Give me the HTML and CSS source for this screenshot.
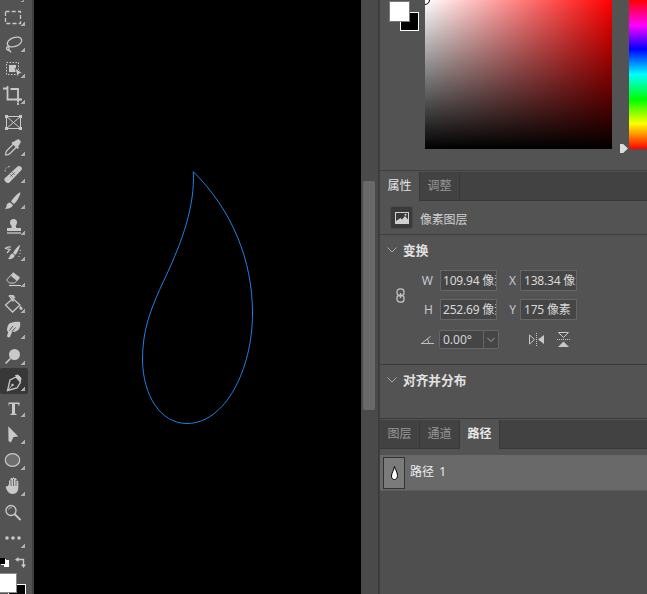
FILE: index.html
```html
<!DOCTYPE html>
<html lang="en">
<head>
  <meta charset="UTF-8">
  <meta name="viewport" content="width=device-width, initial-scale=1.0">
  <title>Paths panel</title>
  <link rel="stylesheet" href="styles.css">
</head>
<body>
  <div class="app">
    <!-- Tools -->
    <div class="toolbar">
      <div class="tool-top"></div>
      <div class="tool more"><svg viewBox="0 0 32 26"><rect x="5.5" y="8.5" width="15" height="12" fill="none" stroke="currentColor" stroke-width="1.3" stroke-dasharray="4 2.2"/></svg></div>
      <div class="tool more"><svg viewBox="0 0 32 26"><ellipse cx="14.5" cy="13" rx="7.5" ry="4.5" transform="rotate(-20 14.5 13)" fill="none" stroke="currentColor" stroke-width="1.3"/><path d="M8 17c-2 1.500-2 3.500 0 4 1.500 .4 2.500 1 3 2.500M8 17c1 1.500 1.500 2.500 1 4" fill="none" stroke="currentColor" stroke-width="1.300"/></svg></div>
      <div class="tool more"><svg viewBox="0 0 32 26"><rect x="6.500" y="7.500" width="12" height="12" fill="none" stroke="currentColor" stroke-dasharray="1.500 1.500"/><rect x="9" y="10" width="7" height="7"/><path d="M15 13l7.500 5-3.500 .8-1.500 3.500z" stroke="#535353" stroke-width=".8"/></svg></div>
      <div class="tool more"><svg viewBox="0 0 32 26"><path d="M3 7.500h4M7.500 5v13.500H21M10.500 8H18V21.500M18 22v2" fill="none" stroke="currentColor" stroke-width="1.800"/><path d="M19.500 18.500h2.500" stroke="currentColor" stroke-width="1.800"/></svg></div>
      <div class="tool"><svg viewBox="0 0 32 26"><path d="M6.500 9.500h14v12h-14zM6.500 9.500l14 12M20.500 9.500l-14 12" fill="none" stroke="currentColor"/><path d="M5 8h3v3H5zM19 8h3v3h-3zM5 20h3v3H5zM19 20h3v3h-3z"/></svg></div>
      <div class="tool more"><svg viewBox="0 0 32 26"><path d="M15 9.500l-8 8c-1 1-1.500 3-1.500 4.500 2 0 3.500-.5 4.500-1.500l8-8" fill="none" stroke="currentColor" stroke-width="1.200"/><path d="M13.500 9l2-1.500 3-1.500 2.500 2.500-1.500 3-1.500 2 1 1-1.500 1.500-6-6 1.500-1.500z"/></svg></div>
      <div class="tool more"><svg viewBox="0 0 32 26"><path d="M4.500 18.500L17.500 6.500c1-.8 2.500-.8 3.500 .2s1.300 2.500 .3 3.500L9.500 22.500c-1 .8-2.500 .8-3.500-.2s-2.300-2.500-1.500-3.800z"/><path d="M10.500 14.500l2 2M12.500 12.500l2 2M10.500 16.500l2-2M12.500 14.500l2-2" stroke="#535353"/><path d="M5 11.500c0-3 2-5 5-5" fill="none" stroke="currentColor" stroke-dasharray="1.500 1.500"/></svg></div>
      <div class="tool more"><svg viewBox="0 0 32 26"><path d="M19.500 6.500c-3 2-6.500 5.500-8.500 9l3 2.500c3-2.500 5.500-7 6.500-11.500z"/><path d="M10 16.500c-2.500 .2-3.500 2-3.500 3.500 0 1-.7 2-1.700 2.500 3 .8 7-.2 8.200-3.500z"/></svg></div>
      <div class="tool more"><svg viewBox="0 0 32 26"><circle cx="13.500" cy="10.500" r="3.500"/><path d="M11.500 12.500h4l.8 3.500H21v3H7v-3h4.500z"/><path d="M7 21h14" stroke="currentColor" stroke-width="1.300"/></svg></div>
      <div class="tool more"><svg viewBox="0 0 32 26"><path d="M19.500 7c-2.500 2-5 5-6.500 8l2.200 2c2-2 4-6 4.800-9.500z"/><path d="M12.500 15.500c-2 .4-2.500 2-3 3.500l-1.500 2c2.500 .5 6-.3 6.800-3.500z"/><path d="M5 10.500l5 1-3 3.500M5 10.500c2-1.500 4-2 6-1.500" fill="none" stroke="currentColor" stroke-width="1.200"/><path d="M20.500 12v1M20 15v1M19 18v1" stroke="currentColor"/></svg></div>
      <div class="tool more"><svg viewBox="0 0 32 26"><path d="M13.500 8.500l6.500 5-3 3.500-6-5z"/><path d="M13.500 8.500l-7 7.500 3 3h5l4.500-4.500" fill="none" stroke="currentColor"/><path d="M9 21.500h12" stroke="currentColor" stroke-width="1.200"/></svg></div>
      <div class="tool more"><svg viewBox="0 0 32 26"><path d="M13 8.500l-7.500 6.500 7 7 7.500-7z" fill="none" stroke="currentColor" stroke-width="1.300"/><path d="M9 5.500l4.500 6" fill="none" stroke="currentColor" stroke-width="1.300"/><path d="M20.500 16c1.500 1 2.200 2 2 3s-2.200 1.500-2.800 0 0-2 .8-3zM8.500 5h5l2 3-2 .5z"/></svg></div>
      <div class="tool more"><svg viewBox="0 0 32 26"><path d="M9.500 7.500c2.500-1.300 6.500-2 10.500-1.500 .5 2.500 .3 6-1.800 8-2 1.800-4.300 2-6 1.700l-2 4.800c-.5 1.200-3 1.300-3.200-.5 .5-1.500 1-3 1.300-4.300-.8-.3-1.500-1-1.300-2 .3-2.500 1-5 2.500-6.200z"/><path d="M9.500 14.500l3.500-4.500M12 15.500l3.500-4" stroke="#535353"/></svg></div>
      <div class="tool more"><svg viewBox="0 0 32 26"><circle cx="14.500" cy="12.500" r="5.500"/><path d="M10.500 16.500L5.500 21.500" stroke="currentColor" stroke-width="1.600"/></svg></div>
      <div class="tool more active"><svg viewBox="0 0 32 26"><path d="M16 9l-6 3-2.500 10.500 9.500-2.500 3.500-6z" fill="none" stroke="currentColor" stroke-width="1.300"/><path d="M15.500 7.500l2.500-.5 3 3-.5 3zM7.500 22.500l4.500-5" fill="currentColor" stroke="currentColor"/><circle cx="12.500" cy="17" r="1.200"/></svg></div>
      <div class="tool more"><svg viewBox="0 0 32 26"><path d="M8.500 8.500h11v3h-1l-.5-1.500h-3v9.500l1.500 .5v1h-6v-1l1.500-.5V10h-3L9.500 11.500h-1z"/></svg></div>
      <div class="tool more"><svg viewBox="0 0 32 26"><path d="M8.300 5.300L18.300 15.500 13.500 16 10.800 21.500 8.500 20z"/></svg></div>
      <div class="tool more"><svg viewBox="0 0 32 26"><ellipse cx="12.500" cy="13" rx="7.200" ry="6.300" fill="#6e6e6e" stroke="currentColor" stroke-width="1.200"/></svg></div>
      <div class="tool more"><svg viewBox="0 0 32 26"><path d="M9 11.500V8c0-1 1.500-1 1.500 0V6c0-1.200 2-1.200 2 0v-.5c0-1.200 2-1.200 2 0V6c0-1 2-1 2 0v2.500c0-1 1.800-1 1.800 0V15c0 3-2 6-5.500 6-3 0-4.500-1.500-6-4L5.800 14.500c-.6-1 .8-1.800 1.500-1z"/><path d="M11 7v6M13.500 6v7M16 7v6" stroke="#535353" stroke-width=".8"/></svg></div>
      <div class="tool"><svg viewBox="0 0 32 26"><circle cx="11" cy="11.500" r="5" fill="none" stroke="currentColor" stroke-width="1.300"/><path d="M8.500 10.500c.5-1.200 1.500-1.800 3-1.800" fill="none" stroke="currentColor"/><path d="M14.500 15l6 6" stroke="currentColor" stroke-width="1.800"/></svg></div>
      <div class="tool more"><svg viewBox="0 0 32 26"><circle cx="7" cy="13" r="1.800"/><circle cx="13" cy="13" r="1.800"/><circle cx="19" cy="13" r="1.800"/></svg></div>
      <!-- Foreground and background colours -->
      <div class="tool-colors">
        <div class="mini-white"></div>
        <div class="mini-black"></div>
        <svg class="swap" viewBox="0 0 11 11"><path d="M2 2.500h6.500v6" fill="none" stroke="currentColor" stroke-width="1.300"/><path d="M3.500 0v5L0 2.500zM6 7.500h5L8.500 11z"/></svg>
        <div class="tool-bg"></div>
        <div class="tool-fg"></div>
      </div>
    </div>

    <!-- Canvas -->
    <div class="canvas">
      <svg class="shape" viewBox="34 0 327 594">
        <path d="M193.300 171.700C195 205 183 240 165 278C150 310 142.500 330 142.500 360C143 395 160 423.500 187 423.500C225 423.500 252.500 370 252.500 313C252.500 260 232 210 193.300 171.700Z"/>
      </svg>
    </div>

    <div class="gutter"><div class="thumb"></div></div>

    <!-- Panels -->
    <div class="panels">
      <section class="color-panel">
        <div class="swatches">
          <div class="swatch-bg"></div>
          <div class="swatch-fg"></div>
        </div>
        <div class="picker"><div class="picker-ring"></div></div>
        <div class="hue-slot"><div class="hue-arrow"></div></div>
        <div class="hue"></div>
      </section>

      <div class="tabs">
        <div class="tab active">属性</div>
        <div class="tab">调整</div>
      </div>

      <div class="layer-kind">
        <div class="kind-icon">
          <svg viewBox="0 0 14 12"><path d="M0 0h14v12H0z" fill="#d0d0d0"/><path d="M1 1h12v6.500L10 4 7 7.500 5.500 6 1 9z" fill="#3a3a3a"/><circle cx="10.500" cy="2.700" r="1" fill="#d0d0d0"/></svg>
        </div>
        <span>像素图层</span>
      </div>

      <section class="transform">
        <div class="section-head"><svg class="chevron" viewBox="0 0 10 6"><path d="M.5 .5L5 5 9.500 .5"/></svg><b>变换</b></div>
        <div class="size-block">
          <div class="link-col">
            <svg viewBox="0 0 9 15"><rect x="1" y=".8" width="7" height="7" rx="3" /><rect x="1" y="7.200" width="7" height="7" rx="3"/><path d="M4.500 5v5"/></svg>
          </div>
          <div class="fields">
            <label>W</label><div class="field">109.94 像素</div>
            <label>X</label><div class="field">138.34 像素</div>
            <label>H</label><div class="field">252.69 像素</div>
            <label>Y</label><div class="field">175 像素</div>
          </div>
        </div>
        <div class="angle-row">
          <svg class="angle-icon" viewBox="0 0 13 8"><path d="M0 7.500h13M.5 7.500L9.500 .5M6.500 3c.8 1.300 1.200 2.800 1.200 4.500"/></svg>
          <div class="angle-select"><span>0.00°</span><i><svg class="chevron" viewBox="0 0 10 6"><path d="M1.500 1L5 4.500 8.500 1"/></svg></i></div>
          <svg class="flip-h" viewBox="0 0 15 13"><path d="M.5 2v9l5-4.500z" fill="none" stroke="#c8c8c8"/><path d="M15 2v9l-6-4.500z" fill="#c8c8c8"/><path d="M7.500 0v13" stroke="#c8c8c8" stroke-dasharray="1 1"/></svg>
          <svg class="flip-v" viewBox="0 0 13 15"><path d="M1.500 .5h10L6.500 5.500z" fill="none" stroke="#c8c8c8"/><path d="M0 7.500h13" stroke="#c8c8c8" stroke-dasharray="1 1"/><path d="M1 15h11l-5.500-5.500z" fill="#c8c8c8"/></svg>
        </div>
      </section>

      <section class="align">
        <div class="section-head"><svg class="chevron" viewBox="0 0 10 6"><path d="M.5 .5L5 5 9.500 .5"/></svg><b>对齐并分布</b></div>
      </section>

      <div class="tabs lower">
        <div class="tab">图层</div>
        <div class="tab">通道</div>
        <div class="tab active">路径</div>
      </div>

      <div class="paths">
        <div class="path-row">
          <div class="path-thumb">
            <svg viewBox="0 0 7 14"><path d="M3.500 .5C4 3 6.500 6 6.500 9.500 6.500 12 5 13.500 3.500 13.500 1.500 13.500 .5 12 .5 10 .5 7 3 4 3.500 .5z"/></svg>
          </div>
          <span>路径 <em>1</em></span>
        </div>
      </div>
    </div>
  </div>
</body>
</html>
```

FILE: styles.css
```css
html, body {
  margin: 0;
  height: 100%;
  overflow: hidden;
}

body {
  background: #000;
  font-family: "Noto Sans", "Noto Sans CJK SC", sans-serif;
  font-size: 12px;
  color: #d6d6d6;
}

* {
  box-sizing: border-box;
}

.app {
  display: flex;
  width: 647px;
  height: 594px;
}

/* Tools */
.toolbar {
  width: 34px;
  flex: none;
  background: #535353;
  border-right: 2px solid #404040;
  color: #c9c9c9;
  overflow: hidden;
}

.tool-top {
  height: 3px;
  background: linear-gradient(135deg, transparent 50%, #a5a5a5 50%) 21px -1px / 3px 3px no-repeat;
}

.tool {
  position: relative;
  height: 26.1px;
}

.tool svg {
  display: block;
  width: 32px;
  height: 26px;
  fill: currentColor;
}

.tool.more::after {
  content: "";
  position: absolute;
  left: 21px;
  top: 19px;
  width: 4px;
  height: 4px;
  background: linear-gradient(135deg, transparent 50%, #b0b0b0 50%);
}

.tool.active {
  background: #383838;
  border-radius: 2px;
  width: 28px;
}

.tool-colors {
  position: relative;
  height: 50px;
  fill: currentColor;
}

.mini-white {
  position: absolute;
  left: 4px;
  top: 9px;
  width: 5px;
  height: 7px;
  background: #fff;
}

.mini-black {
  position: absolute;
  left: 0;
  top: 7px;
  width: 5px;
  height: 6px;
  background: #000;
  box-shadow: 1px 1px 0 #fff;
}

.swap {
  position: absolute;
  left: 15px;
  top: 6px;
  width: 11px;
  height: 11px;
}

.tool-fg {
  position: absolute;
  left: -2px;
  top: 22px;
  width: 19px;
  height: 20px;
  background: #fff;
  border: 1px solid #8a8a8a;
}

.tool-bg {
  position: absolute;
  left: 8px;
  top: 33px;
  width: 18px;
  height: 20px;
  background: #000;
  border: 1px solid #fff;
}

/* Canvas */
.canvas {
  width: 327px;
  flex: none;
  background: #000;
}

.shape {
  display: block;
  width: 327px;
  height: 594px;
}

.shape path {
  fill: none;
  stroke: #2080e4;
  stroke-width: 1;
}

.gutter {
  width: 18px;
  flex: none;
  padding: 181px 2px 0;
  background: #4a4a4a;
  border-right: 1px solid #3a3a3a;
}

.thumb {
  width: 12px;
  height: 229px;
  background: #696969;
  border-radius: 2px;
}

/* Panels */
.panels {
  flex: 1;
  min-width: 0;
  display: flex;
  flex-direction: column;
  background: #535353;
  border-left: 1px solid #3f3f3f;
}

.color-panel {
  display: flex;
  height: 171px;
  padding-left: 9px;
  border-bottom: 1px solid #3f3f3f;
}

.swatches {
  position: relative;
  width: 36px;
  flex: none;
}

.swatch-fg {
  position: absolute;
  left: 0;
  top: 1px;
  width: 21px;
  height: 21px;
  background: #fff;
  border: 1px solid #7a7a7a;
}

.swatch-bg {
  position: absolute;
  left: 11px;
  top: 12px;
  width: 19px;
  height: 19px;
  background: #000;
  border: 1px solid #fff;
}

.picker {
  position: relative;
  width: 187px;
  height: 149px;
  flex: none;
  overflow: hidden;
  background: linear-gradient(to bottom, transparent, #000), linear-gradient(to right, #fff, #f00);
}

.picker-ring {
  position: absolute;
  left: -5px;
  top: -5px;
  width: 10px;
  height: 10px;
  border: 1px solid #000;
  border-radius: 50%;
}

.hue-slot {
  position: relative;
  width: 17px;
  flex: none;
}

.hue-arrow {
  position: absolute;
  left: 8px;
  top: 144px;
  width: 8px;
  height: 9px;
  background: #dcdcdc;
  clip-path: polygon(0 0, 40% 0, 100% 50%, 40% 100%, 0 100%);
}

.hue {
  width: 18px;
  height: 149px;
  flex: none;
  background: linear-gradient(to bottom, #f00, #f0f 17%, #00f 33%, #0ff 50%, #0f0 67%, #ff0 83%, #f00);
}

.tabs {
  display: flex;
  height: 29px;
  margin-top: 1px;
  background: #424242;
  border-bottom: 1px solid #383838;
}

.tab {
  width: 40px;
  text-align: center;
  line-height: 27px;
  color: #969696;
  border-right: 1px solid #383838;
}

.tab.active {
  background: #535353;
  color: #e4e4e4;
  height: 29px;
}

.layer-kind {
  display: flex;
  align-items: center;
  gap: 7px;
  height: 34px;
  padding-left: 10px;
  border-bottom: 1px solid #3f3f3f;
  color: #d0d0d0;
}

.layer-kind span {
  padding-top: 2px;
  letter-spacing: -.2px;
}

.kind-icon {
  display: flex;
  align-items: center;
  justify-content: center;
  width: 23px;
  height: 23px;
  background: #3a3a3a;
  border: 1px solid #4a4a4a;
  border-radius: 3px;
}

.kind-icon svg {
  width: 14px;
  height: 12px;
}

.section-head {
  display: flex;
  align-items: center;
  height: 30px;
  padding-left: 7px;
  color: #e2e2e2;
}

.section-head b {
  margin-left: 6px;
  margin-top: -2px;
  font-size: 12.7px;
  font-weight: 700;
}

.chevron {
  width: 10px;
  height: 6px;
  fill: none;
  stroke: #a8a8a8;
}

.transform {
  height: 130px;
  border-bottom: 1px solid #3a3a3a;
}

.size-block {
  display: flex;
  align-items: center;
  margin-top: 5px;
}

.link-col {
  width: 37px;
  flex: none;
  display: flex;
  justify-content: center;
}

.link-col svg {
  width: 9px;
  height: 15px;
  margin-left: 4px;
  fill: none;
  stroke: #c2c2c2;
  stroke-width: 1.3;
}

.fields {
  display: grid;
  grid-template-columns: 16px 64px 19px 61px;
  grid-auto-rows: 21px;
  row-gap: 8px;
}

.fields label {
  text-align: right;
  line-height: 21px;
  color: #c4c8d0;
}

.field {
  margin-left: 7px;
  width: 57px;
  height: 21px;
  padding-left: 2px;
  line-height: 19px;
  letter-spacing: -.2px;
  overflow: hidden;
  white-space: nowrap;
  background: #454545;
  border: 1px solid #666;
  color: #d8d8d8;
}

.fields .field:nth-child(4),
.fields .field:nth-child(8) {
  margin-left: 4px;
  padding-left: 3px;
}

.angle-row {
  display: flex;
  align-items: center;
  margin-top: 10px;
  padding-left: 41px;
}

.angle-icon {
  width: 13px;
  height: 8px;
  fill: none;
  stroke: #c0c0c0;
}

.angle-select {
  display: flex;
  width: 60px;
  height: 19px;
  margin-left: 5px;
  line-height: 17px;
  background: #454545;
  border: 1px solid #666;
  border-radius: 2px;
}

.angle-select span {
  width: 44px;
  padding-left: 3px;
  border-right: 1px solid #666;
}

.angle-select i {
  flex: 1;
  display: flex;
  align-items: center;
  justify-content: center;
}

.flip-h {
  width: 15px;
  height: 13px;
  margin-left: 30px;
}

.flip-v {
  width: 13px;
  height: 15px;
  margin-left: 13px;
}

.align {
  height: 54px;
  border-bottom: 1px solid #3a3a3a;
}

.tabs.lower {
  margin-top: 1px;
}

.tabs.lower .tab.active {
  color: #e8e8e8;
  font-weight: 700;
}

.paths {
  flex: 1;
  padding-top: 6px;
  background: linear-gradient(#535353 6px, #4f4f4f 6px);
}

.path-row {
  display: flex;
  align-items: center;
  gap: 5px;
  height: 36px;
  padding-left: 3px;
  background: #696969;
  border-bottom: 1px solid #5a5a5a;
  color: #ececec;
}

.path-row span {
  margin-top: -3px;
}

.path-thumb {
  display: flex;
  align-items: center;
  justify-content: center;
  width: 22px;
  height: 32px;
  background: #7b7b7b;
  border: 1px solid #333;
}

.path-thumb svg {
  width: 7px;
  height: 14px;
  fill: #fff;
  stroke: #000;
}

.path-row em {
  font-style: normal;
  margin-left: 2px;
}
```
